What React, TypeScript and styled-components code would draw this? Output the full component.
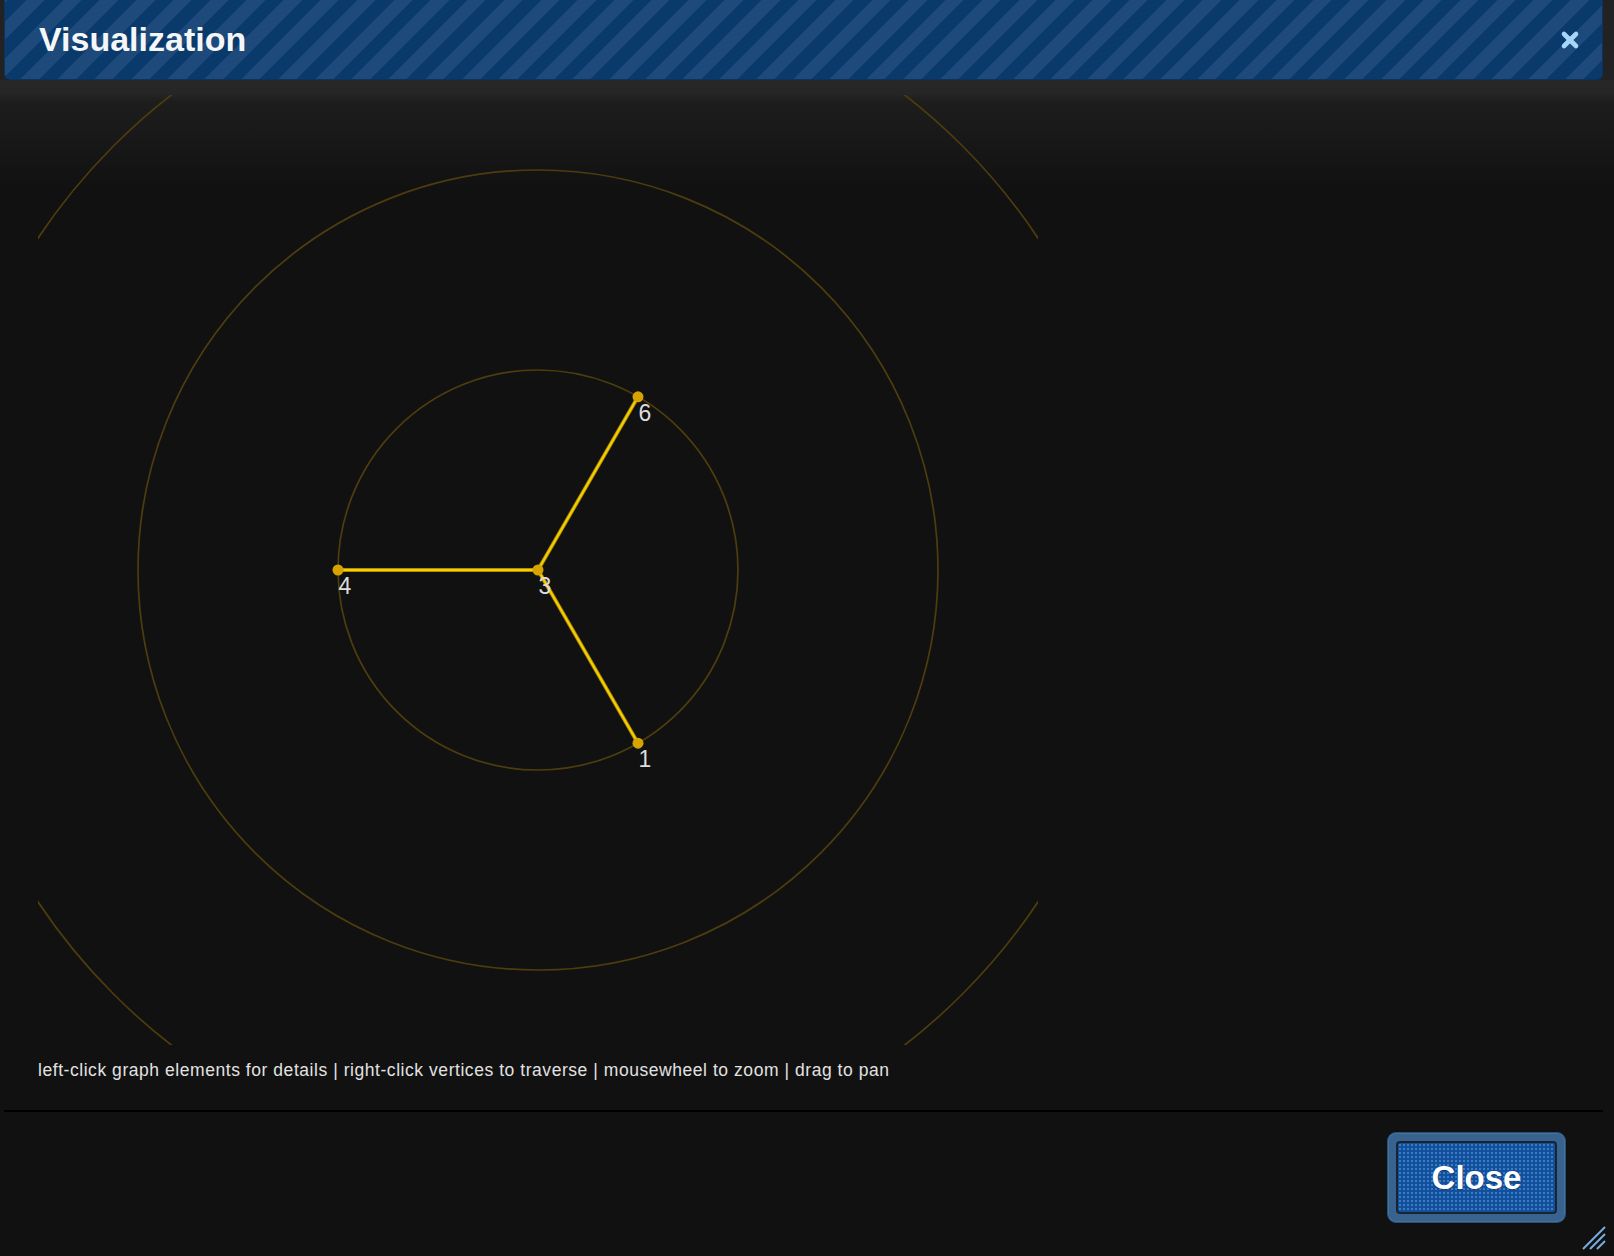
import React from "react";
import styled, { createGlobalStyle } from "styled-components";

const GlobalStyle = createGlobalStyle`
  html, body { margin: 0; padding: 0; background: #222; }
  body { font-family: "Liberation Sans", Arial, sans-serif; }
  * { box-sizing: border-box; }
`;

const Dialog = styled.div`
  height: 1256px;
  display: flex;
  flex-direction: column;
  background: #222;
  position: relative;
  overflow: hidden;
`;

const TitleBar = styled.div`
  height: 80px;
  margin: 0 11px 0 4px;
  display: flex;
  align-items: center;
  justify-content: space-between;
  padding: 0 22px 0 34px;
  border: 1px solid #0c3260;
  border-top: none;
  border-radius: 0 0 6px 6px;
  background: repeating-linear-gradient(
    -45deg,
    #0a3a6c 0px,
    #0a3a6c 13px,
    #1d4a7b 13px,
    #1d4a7b 26px
  );
`;

const Title = styled.h1`
  margin: 0;
  font-family: "Liberation Sans", Arial, sans-serif;
  font-weight: bold;
  font-size: 34px;
  color: #f4f6f8;
`;

const CloseX = styled.button`
  width: 20px;
  height: 20px;
  padding: 0;
  border: none;
  background: transparent;
  display: flex;
  align-items: center;
  justify-content: center;
  cursor: pointer;
`;

const Body = styled.div`
  flex: 1;
  display: flex;
  flex-direction: column;
  background: linear-gradient(
    180deg,
    #272727 0px,
    #262626 13px,
    #1d1d1d 22px,
    #181818 60px,
    #111111 110px
  );
`;

const Content = styled.div`
  margin: 0 11px 0 4px;
  padding: 15px 0 0 34px;
  display: flex;
  flex-direction: column;
`;

const Canvas = styled.svg`
  display: block;
  width: 1000px;
  height: 950px;
`;

const Hint = styled.p`
  margin: 15px 0 30px 0;
  font-family: "Liberation Sans", Arial, sans-serif;
  font-size: 17.5px;
  letter-spacing: 0.55px;
  line-height: 20px;
  color: #e2e2e2;
`;

const Separator = styled.div`
  margin: 0 11px 0 4px;
  height: 2px;
  background: #000;
`;

const Footer = styled.div`
  flex: 1;
  margin: 0 11px 0 4px;
  display: flex;
  justify-content: flex-end;
  align-items: flex-start;
  padding: 20px 37px 0 0;
  background: #111;
`;

const ButtonFrame = styled.div`
  width: 179px;
  height: 91px;
  padding: 8px 8px;
  border-radius: 9px;
  background: #38638e;
  border: 1px solid #2a4f77;
  box-shadow: inset 0 0 0 1px #45729f;
`;

const ActionButton = styled.button`
  width: 100%;
  height: 100%;
  border: 2px solid #1a2430;
  border-radius: 4px;
  background-color: #12509c;
  background-image: radial-gradient(circle, #3c7cc6 0.9px, transparent 1.3px);
  background-size: 4px 4px;
  color: #fff;
  font-family: "Liberation Sans", Arial, sans-serif;
  font-weight: bold;
  font-size: 33px;
  text-shadow: 0 1px 1px rgba(0, 0, 0, 0.35);
  cursor: pointer;
`;

const ResizeGrip = styled.svg`
  position: absolute;
  right: 8px;
  bottom: 6px;
  width: 24px;
  height: 24px;
`;

type Node = { id: string; x: number; y: number };

const center = { x: 500, y: 475 };
const nodes: Node[] = [
  { id: "4", x: 300, y: 475 },
  { id: "3", x: 500, y: 475 },
  { id: "6", x: 600, y: 475 - 173.2 },
  { id: "1", x: 600, y: 475 + 173.2 },
];

export default function App() {
  return (
    <>
      <GlobalStyle />
      <Dialog>
        <TitleBar>
          <Title>Visualization</Title>
          <CloseX aria-label="close">
            <svg width="20" height="20" viewBox="0 0 20 20">
              <g stroke="#a6d6fa" strokeWidth="4.6" strokeLinecap="round">
                <line x1="4" y1="4" x2="16" y2="16" />
                <line x1="16" y1="4" x2="4" y2="16" />
              </g>
            </svg>
          </CloseX>
        </TitleBar>
        <Body>
          <Content>
            <Canvas viewBox="0 0 1000 950">
              <g fill="none" stroke="#4d3d0e" strokeWidth="1.7">
                <circle cx={center.x} cy={center.y} r="200" />
                <circle cx={center.x} cy={center.y} r="400" />
                <circle cx={center.x} cy={center.y} r="600" />
              </g>
              {nodes
                .filter((n) => n.id !== "3")
                .map((n) => (
                  <g key={"e" + n.id}>
                    <line
                      x1={center.x}
                      y1={center.y}
                      x2={n.x}
                      y2={n.y}
                      stroke="#b48e00"
                      strokeWidth="3.8"
                    />
                    <line
                      x1={center.x}
                      y1={center.y}
                      x2={n.x}
                      y2={n.y}
                      stroke="#f4d000"
                      strokeWidth="2"
                    />
                  </g>
                ))}
              {nodes.map((n) => (
                <circle key={"n" + n.id} cx={n.x} cy={n.y} r="5.5" fill="#d6a300" />
              ))}
              {nodes.map((n) => (
                <text
                  key={"t" + n.id}
                  x={n.x + 0.5}
                  y={n.y + 24}
                  fill="#dddddd"
                  fontFamily="Liberation Sans, Arial, sans-serif"
                  fontSize="23"
                >
                  {n.id}
                </text>
              ))}
            </Canvas>
            <Hint>
              left-click graph elements for details | right-click vertices to traverse | mousewheel
              to zoom | drag to pan
            </Hint>
          </Content>
          <Separator />
          <Footer>
            <ButtonFrame>
              <ActionButton>Close</ActionButton>
            </ButtonFrame>
          </Footer>
        </Body>
        <ResizeGrip viewBox="0 0 24 24">
          <g stroke="#78aee0" strokeWidth="2">
            <line x1="1" y1="23" x2="23" y2="1" />
            <line x1="8" y1="23" x2="23" y2="8" />
            <line x1="15" y1="23" x2="23" y2="15" />
          </g>
        </ResizeGrip>
      </Dialog>
    </>
  );
}
